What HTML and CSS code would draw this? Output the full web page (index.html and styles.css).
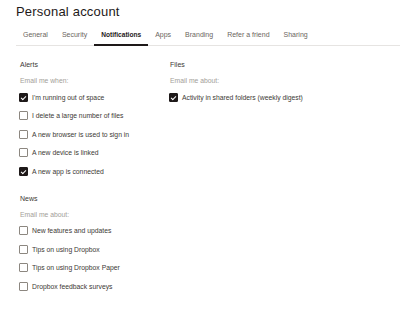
FILE: index.html
```html
<!DOCTYPE html>
<html lang="en">
<head>
    <meta charset="UTF-8">
    <meta name="viewport" content="width=device-width, initial-scale=1.0">
    <title>Personal account</title>
    <link rel="stylesheet" href="styles.css">
</head>
<body>
    <div class="page">
        <h1>Personal account</h1>

        <nav class="tabs">
            <a class="tab">General</a>
            <a class="tab">Security</a>
            <a class="tab active">Notifications</a>
            <a class="tab">Apps</a>
            <a class="tab">Branding</a>
            <a class="tab">Refer a friend</a>
            <a class="tab">Sharing</a>
        </nav>

        <div class="columns">
            <div class="column">
                <div class="group">
                    <h2>Alerts</h2>
                    <p class="hint">Email me when:</p>
                    <label class="option"><span class="box checked"></span>I'm running out of space</label>
                    <label class="option"><span class="box"></span>I delete a large number of files</label>
                    <label class="option"><span class="box"></span>A new browser is used to sign in</label>
                    <label class="option"><span class="box"></span>A new device is linked</label>
                    <label class="option"><span class="box checked"></span>A new app is connected</label>
                </div>

                <div class="group">
                    <h2>News</h2>
                    <p class="hint">Email me about:</p>
                    <label class="option"><span class="box"></span>New features and updates</label>
                    <label class="option"><span class="box"></span>Tips on using Dropbox</label>
                    <label class="option"><span class="box"></span>Tips on using Dropbox Paper</label>
                    <label class="option"><span class="box"></span>Dropbox feedback surveys</label>
                </div>
            </div>

            <div class="column">
                <div class="group">
                    <h2>Files</h2>
                    <p class="hint">Email me about:</p>
                    <label class="option"><span class="box checked"></span>Activity in shared folders (weekly digest)</label>
                </div>
            </div>
        </div>
    </div>
</body>
</html>
```

FILE: styles.css
```css
* {
    box-sizing: border-box;
}

body {
    margin: 0;
    background-color: #fff;
    color: #1e1919;
    font-family: "Liberation Sans", Arial, sans-serif;
}

.page {
    padding: 0 0 0 16px;
}

h1 {
    margin: 0;
    padding-top: 3px;
    font-size: 13px;
    font-weight: normal;
    letter-spacing: 0.2px;
    line-height: 17px;
    color: #1e1919;
}

.tabs {
    display: flex;
    margin-top: 6px;
    border-bottom: 1px solid #e6e4e2;
}

.tab {
    padding: 4px 7px 5px;
    font-size: 7px;
    line-height: 9px;
    color: #6b655e;
    border-bottom: 2px solid transparent;
    margin-bottom: -1px;
}

.tab.active {
    color: #1e1919;
    font-weight: bold;
    font-size: 6.6px;
    border-bottom-color: #1e1919;
}

.columns {
    display: flex;
    padding: 14px 0 0 4px;
}

.column {
    width: 150px;
}

.group {
    margin-bottom: 13px;
}

h2 {
    margin: 0 0 8px;
    font-size: 7px;
    font-weight: normal;
    line-height: 9px;
    color: #3d3935;
}

.hint {
    margin: 0 0 3px;
    font-size: 6.8px;
    line-height: 8px;
    color: #a39e98;
}

.option {
    display: flex;
    align-items: center;
    gap: 4px;
    height: 18.5px;
    font-size: 6.8px;
    color: #3d3935;
}

.box {
    flex: none;
    width: 9px;
    height: 9px;
    margin-left: -1px;
    border: 1px solid #8c8780;
    border-radius: 1px;
    position: relative;
}

.box.checked {
    background-color: #1e1919;
    border-color: #1e1919;
}

.box.checked::after {
    content: "";
    position: absolute;
    left: 2.2px;
    top: 1px;
    width: 2px;
    height: 4px;
    border: solid #fff;
    border-width: 0 1px 1px 0;
    transform: rotate(45deg);
}
```
